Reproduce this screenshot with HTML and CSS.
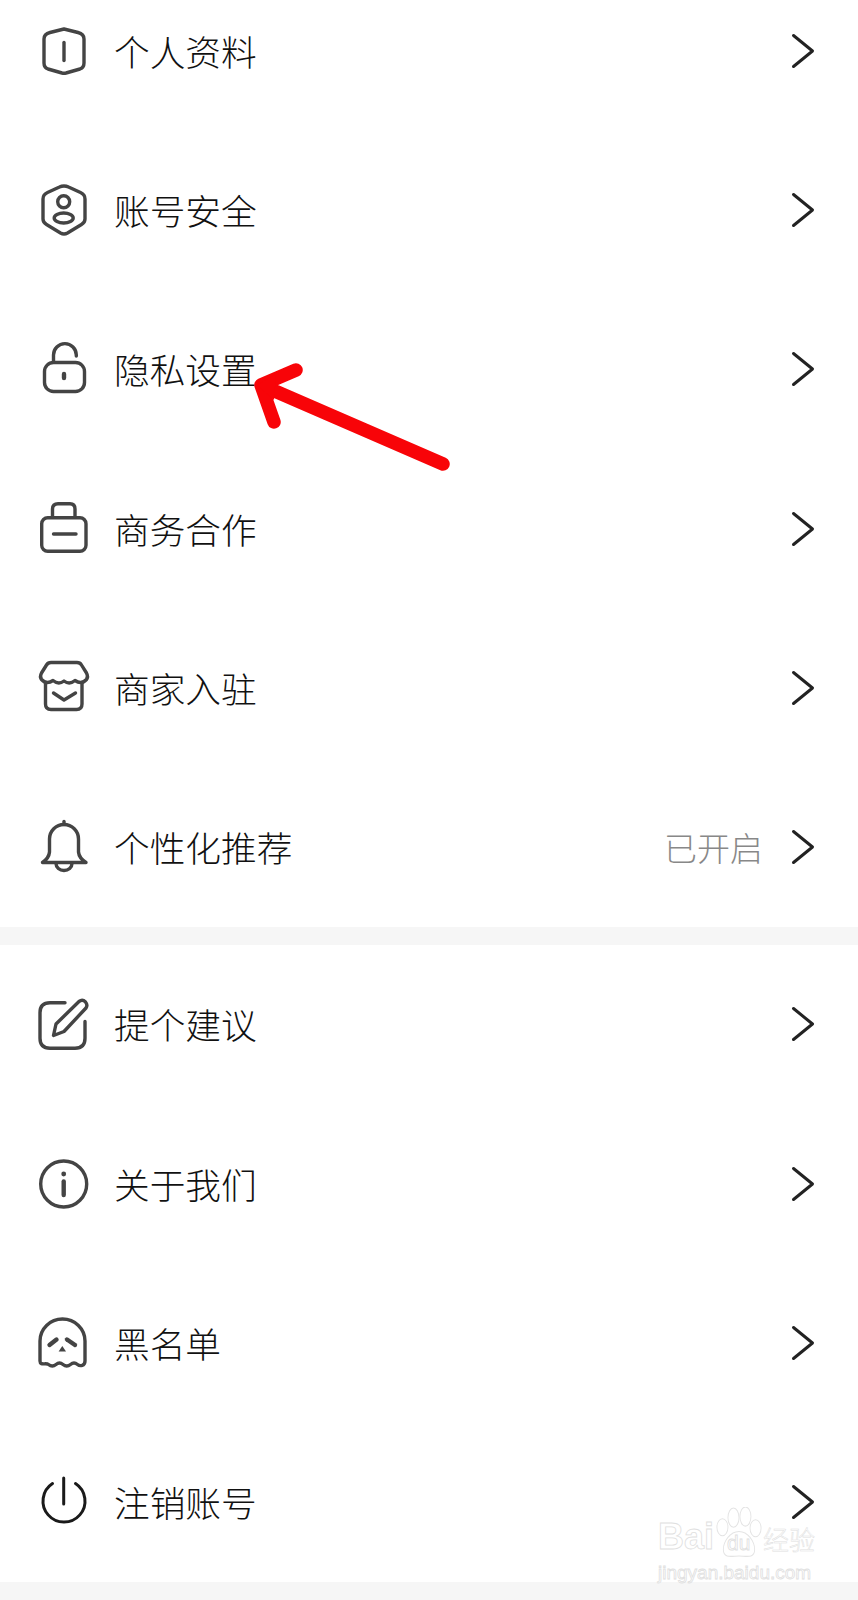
FILE: index.html
```html
<!DOCTYPE html>
<html lang="zh-CN">
<head>
    <meta charset="UTF-8">
    <title>设置</title>
    <link rel="stylesheet" href="styles.css">
</head>
<body>
<div class="page">

    <!-- first group, top row is cut off by the screenshot -->
    <div class="group first">
        <div class="row">
            <svg class="icon" viewBox="0 0 60 60"><path d="M30 8L44 11.5Q50 13 50 18V42Q50 46.5 46 48L32 52Q30 52.5 28 52L14 48Q10 46.5 10 42V18Q10 13 16 11.5Z"/><path d="M30 21.5V39.5"/></svg>
            <span class="label">个人资料</span>
            <svg class="chevron" viewBox="0 0 24 36"><path d="M2.5 2.5L21.5 18L2.5 33.5"/></svg>
        </div>
        <div class="row">
            <svg class="icon" viewBox="0 0 60 60"><path d="M30 6Q32.5 6 34.5 7L46.5 12.5Q51 14.5 51 19V39Q51 42.5 47.5 44.5L33.5 53Q30 55 26.5 53L12.5 44.5Q9 42.5 9 39V19Q9 14.5 13.5 12.5L25.5 7Q27.5 6 30 6Z"/><circle cx="29.7" cy="21.7" r="6"/><ellipse cx="29.7" cy="38" rx="9.5" ry="5"/></svg>
            <span class="label">账号安全</span>
            <svg class="chevron" viewBox="0 0 24 36"><path d="M2.5 2.5L21.5 18L2.5 33.5"/></svg>
        </div>
        <div class="row">
            <svg class="icon" viewBox="0 0 60 60"><rect x="10.5" y="23.5" width="40" height="29" rx="9"/><path d="M19.5 23V16A11.4 11.4 0 0 1 42.3 16V17"/><path class="thick" d="M30 35V39"/></svg>
            <span class="label">隐私设置</span>
            <svg class="chevron" viewBox="0 0 24 36"><path d="M2.5 2.5L21.5 18L2.5 33.5"/></svg>
        </div>
        <div class="row">
            <svg class="icon" viewBox="0 0 60 60"><rect x="7.7" y="18.7" width="44.3" height="33.6" rx="6"/><path d="M18.5 18V10Q18.5 4.7 24 4.7H36Q41 4.7 41 10V18"/><path d="M19.5 35H42"/></svg>
            <span class="label">商务合作</span>
            <svg class="chevron" viewBox="0 0 24 36"><path d="M2.5 2.5L21.5 18L2.5 33.5"/></svg>
        </div>
        <div class="row">
            <svg class="icon" viewBox="0 0 60 60"><path d="M17 4.5H43Q46 4.5 47.5 7L52.5 15Q54.5 18.5 52.5 21.5Q47.5 27 41 22.5Q35.5 27 30 23Q24.5 27 19 22.5Q12.5 27 7.5 21.5Q5.5 18.5 7.5 15L12.5 7Q14 4.5 17 4.5Z"/><path d="M11.5 25V46Q11.5 51.5 17 51.5H42.5Q48 51.5 48 46V25"/><path d="M19.5 35L30 42L41.5 35"/></svg>
            <span class="label">商家入驻</span>
            <svg class="chevron" viewBox="0 0 24 36"><path d="M2.5 2.5L21.5 18L2.5 33.5"/></svg>
        </div>
        <div class="row">
            <svg class="icon" viewBox="0 0 60 60"><path d="M8.5 45.5Q15 41 15.5 35V22A14.5 14.5 0 0 1 44.5 22V35Q45 41 52 45.5Z"/><path d="M30 4.5V7.5"/><path d="M22 46.5A8 7 0 0 0 38 46.5"/></svg>
            <span class="label">个性化推荐</span>
            <span class="value">已开启</span>
            <svg class="chevron" viewBox="0 0 24 36"><path d="M2.5 2.5L21.5 18L2.5 33.5"/></svg>
        </div>
    </div>

    <div class="band"></div>

    <div class="group">
        <div class="row">
            <svg class="icon" viewBox="0 0 60 60"><path d="M31 8.7H16Q6 8.7 6 18.7V44.3Q6 54.3 16 54.3H41Q51 54.3 51 44.3V27.5"/><path d="M19.5 41.5L22 30L45 7.5Q48.5 5 51.5 8Q54 11 52 14L30 37.5Z"/></svg>
            <span class="label">提个建议</span>
            <svg class="chevron" viewBox="0 0 24 36"><path d="M2.5 2.5L21.5 18L2.5 33.5"/></svg>
        </div>
        <div class="row">
            <svg class="icon" viewBox="0 0 60 60"><circle cx="29.7" cy="30" r="23"/><circle class="solid" cx="29.7" cy="20" r="2.4"/><path class="thick" d="M29.7 27.5V41"/></svg>
            <span class="label">关于我们</span>
            <svg class="chevron" viewBox="0 0 24 36"><path d="M2.5 2.5L21.5 18L2.5 33.5"/></svg>
        </div>
        <div class="row">
            <svg class="icon" viewBox="0 0 60 60"><path d="M51 28V48C51 53 46 53.5 43.5 51.5C41 49.5 39 49.5 36.5 51.5C34 53.5 31.5 53.5 29 51.5C26.5 49.5 24.5 49.5 22 51.5C19.5 53.5 17 53.5 14.5 51.5C12 49.5 6 53 6 48V28A22.5 22 0 0 1 51 28Z"/><path class="thick" d="M15.5 32L22.5 26.5"/><path class="thick" d="M33 26.5L41 32"/><path class="solid" d="M28.3 33L32 38.5H24.6Z"/></svg>
            <span class="label">黑名单</span>
            <svg class="chevron" viewBox="0 0 24 36"><path d="M2.5 2.5L21.5 18L2.5 33.5"/></svg>
        </div>
        <div class="row">
            <svg class="icon dark" viewBox="0 0 60 60"><path d="M18.5 11.5A21 21 0 1 0 41.5 11.5"/><path d="M29.7 6V32"/></svg>
            <span class="label">注销账号</span>
            <svg class="chevron" viewBox="0 0 24 36"><path d="M2.5 2.5L21.5 18L2.5 33.5"/></svg>
        </div>
    </div>

    <div class="band"></div>

    <!-- red arrow drawn on top of the screenshot -->
    <svg class="arrow" viewBox="0 0 210 120"><path d="M193 104L11 25M46 10L11 25L24 62"/><path class="arrow-tip" d="M7 25L26 14L24 40Z"/></svg>

    <!-- watermark -->
    <div class="mark">
        <div class="mark-top">
            <span class="mark-bai">Bai</span>
            <span class="mark-du">
                <svg class="paw" viewBox="2 1 50 47" preserveAspectRatio="none"><ellipse cx="9" cy="20" rx="6" ry="8"/><ellipse cx="21" cy="11" rx="6" ry="9"/><ellipse cx="34" cy="10" rx="6" ry="9"/><ellipse cx="45" cy="21" rx="6" ry="8"/><path d="M27 24C37 24 44 34 44 41C44 50 34 47 27 47C20 47 10 50 10 41C10 34 17 24 27 24Z"/></svg>
                <span class="mark-du-text">du</span>
            </span>
            <span class="mark-cn">经验</span>
        </div>
        <div class="mark-url">jingyan.baidu.com</div>
    </div>
</div>
</body>
</html>
```

FILE: styles.css
```css
html, body {
  margin: 0;
  padding: 0;
  background-color: white;
}

.page {
  position: relative;
  height: 1600px;
  overflow: hidden;
  font-family: "Noto Sans CJK SC", "Noto Sans", sans-serif;
}

.group.first {
  margin-top: -29px; /* first row is scrolled off the top */
}

.row {
  display: flex;
  align-items: center;
  height: 159.3px;
  padding: 0 43px 0 34px;
  box-sizing: border-box;
}

.icon {
  width: 60px;
  height: 60px;
  flex: none;
  fill: none;
  stroke: #444;
  stroke-width: 3.4;
  stroke-linecap: round;
  stroke-linejoin: round;
}

.icon.dark {
  stroke: #1a1a1a;
  stroke-width: 3;
}

.icon .solid {
  fill: #444;
  stroke: none;
}

.icon .thick {
  stroke-width: 4.4;
}

.label {
  margin-left: 20px;
  font-size: 35.7px;
  font-weight: 300;
  line-height: 44px;
  color: #111;
}

.value {
  margin-left: auto;
  margin-right: 28px;
  font-size: 33px;
  font-weight: 300;
  line-height: 44px;
  color: #888;
}

.chevron {
  width: 24px;
  height: 36px;
  flex: none;
  margin-left: auto;
  fill: none;
  stroke: #222;
  stroke-width: 3;
  stroke-linecap: round;
  stroke-linejoin: round;
}

.value + .chevron {
  margin-left: 0;
}

.band {
  height: 18px;
  background-color: #f6f6f6;
}

.arrow {
  position: absolute;
  left: 250px;
  top: 360px;
  width: 210px;
  height: 120px;
  fill: none;
  stroke: #f80408;
  stroke-width: 13.5;
  stroke-linecap: round;
  stroke-linejoin: round;
}

.arrow-tip {
  fill: #f80408;
  stroke: none;
}

.mark {
  position: absolute;
  left: 658px;
  top: 1507px;
  width: 160px;
  color: white;
  -webkit-text-stroke: 0.8px #e0e0e0;
  font-family: "Liberation Sans", sans-serif;
}

.mark-top {
  display: flex;
  align-items: flex-end;
  height: 50px;
}

.mark-bai {
  font-size: 36px;
  font-weight: bold;
  line-height: 40px;
}

.mark-du {
  position: relative;
  width: 46px;
  height: 50px;
  margin-left: 2px;
}

.paw {
  position: absolute;
  left: 0;
  top: 0;
  width: 46px;
  height: 50px;
  fill: white;
  stroke: #e4e4e4;
  stroke-width: 1;
}

.mark-du-text {
  position: absolute;
  left: 11px;
  bottom: 3px;
  font-size: 21px;
  line-height: 22px;
}

.mark-cn {
  margin-left: 1px;
  font-family: "Noto Sans CJK SC", sans-serif;
  font-size: 26px;
  font-weight: 300;
  line-height: 36px;
  -webkit-text-stroke-width: 0.5px;
}

.mark-url {
  margin-top: 6px;
  font-size: 19px;
  line-height: 20px;
  white-space: nowrap;
}
```
